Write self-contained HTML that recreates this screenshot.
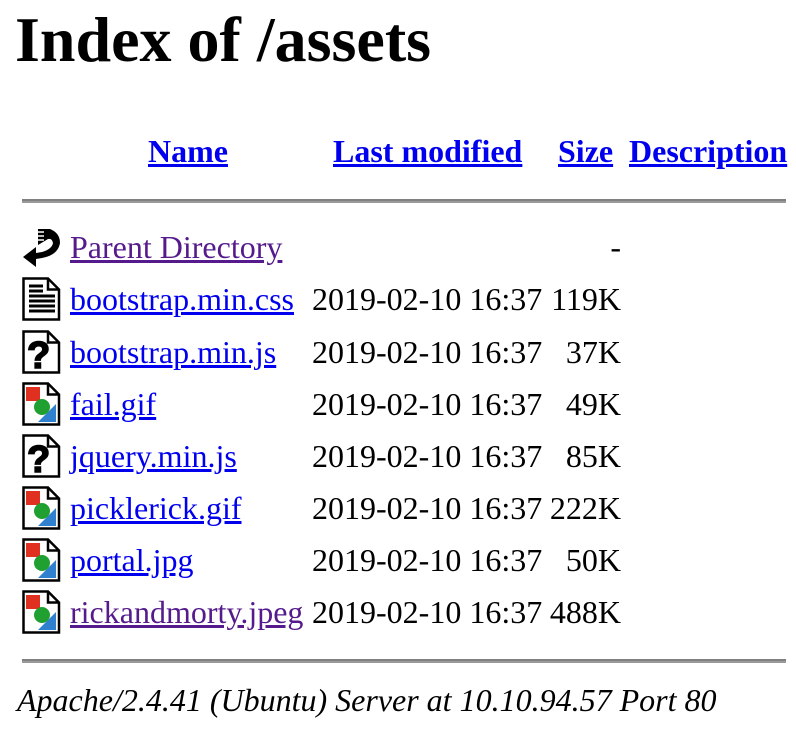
<!DOCTYPE html>
<html><head><meta charset="utf-8"><style>
body{margin:0;width:796px;height:738px;background:#fff;font-family:"Liberation Serif",serif;color:#000;position:relative;overflow:hidden}
.a{position:absolute;white-space:nowrap;font-size:32px;line-height:36px}
a{color:#0000ee;text-decoration:underline}
a.v{color:#551a8b}
h1{position:absolute;left:15px;top:0;margin:0;font-size:64px;line-height:80px;font-weight:bold}
.hr{position:absolute;left:22px;width:764px;height:2px;background:#808080;border-bottom:2px solid #9a9a9a}
.b{font-weight:bold}
svg{position:absolute}
.d{left:312px}
.s{left:520px;width:101px;text-align:right}
</style></head><body>
<h1>Index of /assets</h1>
<div class="a b" style="left:148px;top:133px"><a href="#">Name</a></div>
<div class="a b" style="left:333px;top:133px"><a href="#">Last modified</a></div>
<div class="a b" style="left:558px;top:133px"><a href="#">Size</a></div>
<div class="a b" style="left:629px;top:133px"><a href="#">Description</a></div>
<div class="hr" style="top:199px"></div>

<svg style="left:22px;top:225px" width="42" height="44" viewBox="0 0 42 44"><path d="M16 4 L28 4 Q38 8 38 18 Q36 30 20 33 L14 34 L14 42 L1 32 L14 22 L14 28 L20 27 Q30 24 31 18 Q30 13 26 14 L16 20 Z" fill="#000"/><path d="M16 7h6M16 11h6M16 15h6" stroke="#fff" stroke-width="1.5"/></svg>
<div class="a" style="left:70px;top:229px"><a class="v" href="#">Parent Directory</a></div>
<div class="a s" style="top:229px">-</div>

<svg style="left:22px;top:277px" width="40" height="44" viewBox="0 0 40 44"><path d="M1.5 1.5 H26 L37 12.5 V42.5 H1.5 Z" fill="#fff" stroke="#000" stroke-width="2.5"/><path d="M26 1.5 V12.5 H37" fill="none" stroke="#000" stroke-width="2.5"/><path d="M7 9h14M7 14h14M7 19h26M7 24h26M7 29h26M7 34h26" stroke="#000" stroke-width="3"/></svg>
<div class="a" style="left:70px;top:281px"><a href="#">bootstrap.min.css</a></div>
<div class="a d" style="top:281px">2019-02-10 16:37</div><div class="a s" style="top:281px">119K</div>

<svg style="left:22px;top:330px" width="40" height="44" viewBox="0 0 40 44"><path d="M1.5 1.5 H26 L37 12.5 V42.5 H1.5 Z" fill="#fff" stroke="#000" stroke-width="2.5"/><path d="M26 1.5 V12.5 H37" fill="none" stroke="#000" stroke-width="2.5"/><text x="5" y="38" font-family="Liberation Sans" font-weight="bold" font-size="38" stroke="#000" stroke-width="1.5">?</text></svg>
<div class="a" style="left:70px;top:334px"><a href="#">bootstrap.min.js</a></div>
<div class="a d" style="top:334px">2019-02-10 16:37</div><div class="a s" style="top:334px">37K</div>

<svg style="left:22px;top:382px" width="40" height="44" viewBox="0 0 40 44"><path d="M1.5 1.5 H26 L37 12.5 V42.5 H1.5 Z" fill="#fff" stroke="#000" stroke-width="2.5"/><path d="M26 1.5 V12.5 H37" fill="none" stroke="#000" stroke-width="2.5"/><rect x="4" y="5" width="14" height="14" fill="#e03020"/><path d="M34 22 V40 H16 Z" fill="#3080d0"/><circle cx="20" cy="25" r="8" fill="#20a030"/></svg>
<div class="a" style="left:70px;top:386px"><a href="#">fail.gif</a></div>
<div class="a d" style="top:386px">2019-02-10 16:37</div><div class="a s" style="top:386px">49K</div>

<svg style="left:22px;top:434px" width="40" height="44" viewBox="0 0 40 44"><path d="M1.5 1.5 H26 L37 12.5 V42.5 H1.5 Z" fill="#fff" stroke="#000" stroke-width="2.5"/><path d="M26 1.5 V12.5 H37" fill="none" stroke="#000" stroke-width="2.5"/><text x="5" y="38" font-family="Liberation Sans" font-weight="bold" font-size="38" stroke="#000" stroke-width="1.5">?</text></svg>
<div class="a" style="left:70px;top:438px"><a href="#">jquery.min.js</a></div>
<div class="a d" style="top:438px">2019-02-10 16:37</div><div class="a s" style="top:438px">85K</div>

<svg style="left:22px;top:486px" width="40" height="44" viewBox="0 0 40 44"><path d="M1.5 1.5 H26 L37 12.5 V42.5 H1.5 Z" fill="#fff" stroke="#000" stroke-width="2.5"/><path d="M26 1.5 V12.5 H37" fill="none" stroke="#000" stroke-width="2.5"/><rect x="4" y="5" width="14" height="14" fill="#e03020"/><path d="M34 22 V40 H16 Z" fill="#3080d0"/><circle cx="20" cy="25" r="8" fill="#20a030"/></svg>
<div class="a" style="left:70px;top:490px"><a href="#">picklerick.gif</a></div>
<div class="a d" style="top:490px">2019-02-10 16:37</div><div class="a s" style="top:490px">222K</div>

<svg style="left:22px;top:538px" width="40" height="44" viewBox="0 0 40 44"><path d="M1.5 1.5 H26 L37 12.5 V42.5 H1.5 Z" fill="#fff" stroke="#000" stroke-width="2.5"/><path d="M26 1.5 V12.5 H37" fill="none" stroke="#000" stroke-width="2.5"/><rect x="4" y="5" width="14" height="14" fill="#e03020"/><path d="M34 22 V40 H16 Z" fill="#3080d0"/><circle cx="20" cy="25" r="8" fill="#20a030"/></svg>
<div class="a" style="left:70px;top:542px"><a href="#">portal.jpg</a></div>
<div class="a d" style="top:542px">2019-02-10 16:37</div><div class="a s" style="top:542px">50K</div>

<svg style="left:22px;top:590px" width="40" height="44" viewBox="0 0 40 44"><path d="M1.5 1.5 H26 L37 12.5 V42.5 H1.5 Z" fill="#fff" stroke="#000" stroke-width="2.5"/><path d="M26 1.5 V12.5 H37" fill="none" stroke="#000" stroke-width="2.5"/><rect x="4" y="5" width="14" height="14" fill="#e03020"/><path d="M34 22 V40 H16 Z" fill="#3080d0"/><circle cx="20" cy="25" r="8" fill="#20a030"/></svg>
<div class="a" style="left:70px;top:594px"><a class="v" href="#">rickandmorty.jpeg</a></div>
<div class="a d" style="top:594px">2019-02-10 16:37</div><div class="a s" style="top:594px">488K</div>

<div class="hr" style="top:659px"></div>
<div class="a" style="left:17px;top:682px;font-style:italic">Apache/2.4.41 (Ubuntu) Server at 10.10.94.57 Port 80</div>
</body></html>
